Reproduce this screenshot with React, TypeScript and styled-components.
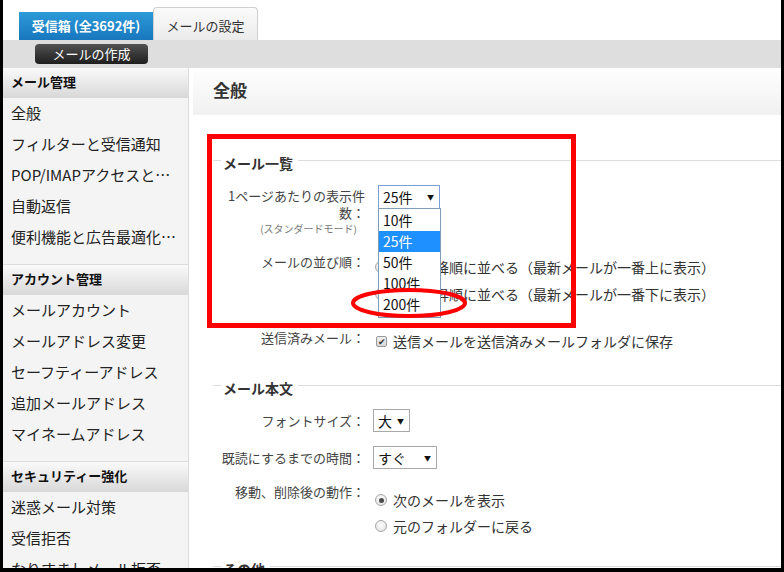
import React from 'react';
import styled, { createGlobalStyle } from 'styled-components';

const FONT = `"Noto Sans CJK JP", "Noto Sans", sans-serif`;

const GlobalStyle = createGlobalStyle`
  html, body {
    margin: 0;
    background: #000;
  }
  body {
    font-family: ${FONT};
  }
`;

const menuGroups = [
  {
    title: 'メール管理',
    items: ['全般', 'フィルターと受信通知', 'POP/IMAPアクセスと…', '自動返信', '便利機能と広告最適化…'],
  },
  {
    title: 'アカウント管理',
    items: ['メールアカウント', 'メールアドレス変更', 'セーフティーアドレス', '追加メールアドレス', 'マイネームアドレス'],
  },
  {
    title: 'セキュリティー強化',
    items: ['迷惑メール対策', '受信拒否', 'なりすましメール拒否'],
  },
];

const perPage = ['10件', '25件', '50件', '100件', '200件'];

const App = () => {
  return (
    <React.Fragment>
      <GlobalStyle />
      <Frame>
        <TabBar>
          <Tab $active>受信箱 (全3692件)</Tab>
          <Tab>メールの設定</Tab>
        </TabBar>
        <ToolBar>
          <ComposeButton>メールの作成</ComposeButton>
        </ToolBar>
        <Body>
          <Sidebar>
            {menuGroups.map((group, i) => (
              <Group key={group.title} $first={i === 0}>
                <GroupHead>{group.title}</GroupHead>
                {group.items.map((item) => (
                  <Item key={item}>{item}</Item>
                ))}
              </Group>
            ))}
          </Sidebar>
          <Main>
            <TitleBar>全般</TitleBar>
            <Content>
              <SectionHead $mt={38}>
                <span>メール一覧</span>
              </SectionHead>

              <Row $mt={12}>
                <Label $pt={2}>
                  1ページあたりの表示件数：
                  <Sub>(スタンダードモード)</Sub>
                </Label>
                <div>
                  <Select $width={62} $height={24} $focused $ml={5}>
                    <span>25件</span>
                    <Arrow>▼</Arrow>
                    <DropList>
                      {perPage.map((p) => (
                        <DropOption key={p} $selected={p === '25件'}>
                          {p}
                        </DropOption>
                      ))}
                    </DropList>
                  </Select>
                </div>
              </Row>

              <Row $mt={17}>
                <Label>メールの並び順：</Label>
                <div>
                  <Choice $height={27}>
                    <Radio $checked />
                    日付の降順に並べる（最新メールが一番上に表示）
                  </Choice>
                  <Choice $height={27}>
                    <Radio />
                    日付の昇順に並べる（最新メールが一番下に表示）
                  </Choice>
                </div>
              </Row>

              <Row $mt={22}>
                <Label>送信済みメール：</Label>
                <div>
                  <Choice $height={24}>
                    <Check>✔</Check>
                    送信メールを送信済みメールフォルダに保存
                  </Choice>
                </div>
              </Row>

              <SectionHead $mt={25}>
                <span>メール本文</span>
              </SectionHead>

              <Row $mt={11}>
                <Label $lh={23}>フォントサイズ：</Label>
                <div>
                  <Select $width={37} $height={23}>
                    <span>大</span>
                    <Arrow>▼</Arrow>
                  </Select>
                </div>
              </Row>

              <Row $mt={14}>
                <Label $lh={23}>既読にするまでの時間：</Label>
                <div>
                  <Select $width={64} $height={23}>
                    <span>すぐ</span>
                    <Arrow>▼</Arrow>
                  </Select>
                </div>
              </Row>

              <Row $mt={14}>
                <Label>移動、削除後の動作：</Label>
                <Controls $pt={4}>
                  <Choice $height={26}>
                    <Radio $checked />
                    次のメールを表示
                  </Choice>
                  <Choice $height={26}>
                    <Radio />
                    元のフォルダーに戻る
                  </Choice>
                </Controls>
              </Row>

              <SectionHead $mt={20}>
                <span>その他</span>
              </SectionHead>
            </Content>
          </Main>
        </Body>

        <RedBox />
        <RedRing width="120" height="34" viewBox="0 0 120 34">
          <ellipse cx="60" cy="17" rx="56" ry="13" fill="none" stroke="#ff0000" strokeWidth="4" />
        </RedRing>
      </Frame>
    </React.Fragment>
  );
};

export default App;

const Frame = styled.div`
  position: relative;
  width: 778px;
  height: 568px;
  margin-left: 3px;
  background: #fff;
  overflow: hidden;
  display: flex;
  flex-direction: column;
`;

const TabBar = styled.div`
  height: 40px;
  flex-shrink: 0;
  display: flex;
  align-items: flex-end;
  padding-left: 16px;
`;

const Tab = styled.div<{ $active?: boolean }>`
  box-sizing: border-box;
  font-size: 13px;
  text-align: center;
  ${(p) =>
    p.$active
      ? `
    width: 134px;
    height: 28px;
    line-height: 27px;
    color: #fff;
    font-weight: bold;
    background: linear-gradient(#2d9ad9, #1877bd);
  `
      : `
    width: 105px;
    height: 33px;
    padding-top: 8px;
    line-height: 20px;
    color: #333;
    border: 1px solid #cfcfcf;
    border-bottom: none;
    border-radius: 4px 4px 0 0;
    background: linear-gradient(#fbfbfb, #ebebeb);
  `}
`;

const ToolBar = styled.div`
  height: 28px;
  flex-shrink: 0;
  background: #dedede;
  padding: 4px 0 0 32px;
  box-sizing: border-box;
`;

const ComposeButton = styled.div`
  width: 113px;
  height: 20px;
  line-height: 19px;
  border-radius: 4px;
  background: linear-gradient(#525252, #1e1e1e);
  color: #fff;
  font-size: 13px;
  text-align: center;
`;

const Body = styled.div`
  flex: 1;
  min-height: 0;
  display: flex;
`;

const Sidebar = styled.div`
  width: 185px;
  flex-shrink: 0;
  background: #f4f4f4;
  border-right: 1px solid #dcdcdc;
`;

const Group = styled.div<{ $first?: boolean }>`
  padding-bottom: 11px;
  border-top: ${(p) => (p.$first ? 'none' : '1px solid #dcdcdc')};
`;

const GroupHead = styled.div`
  height: 30px;
  line-height: 28px;
  padding: 0 0 2px 8px;
  box-sizing: border-box;
  font-size: 13px;
  font-weight: bold;
  color: #111;
  background: linear-gradient(#fafafa, #d8d8d8);
`;

const Item = styled.div`
  height: 31px;
  line-height: 29px;
  padding: 0 0 2px 8px;
  box-sizing: border-box;
  font-size: 15px;
  color: #222;
  white-space: nowrap;
`;

const Main = styled.div`
  flex: 1;
  margin-left: 4px;
  min-width: 0;
`;

const TitleBar = styled.div`
  height: 47px;
  line-height: 44px;
  padding: 0 0 3px 20px;
  box-sizing: border-box;
  font-size: 17px;
  font-weight: bold;
  color: #333;
  background: linear-gradient(#fefefe, #f1f1f1);
`;

const Content = styled.div`
  padding-left: 20px;
`;

const SectionHead = styled.div<{ $mt: number }>`
  display: flex;
  align-items: center;
  height: 20px;
  margin-top: ${(p) => p.$mt}px;
  font-size: 14px;
  font-weight: bold;
  color: #333;
  span {
    padding: 0 5px 0 2px;
  }
  &::before,
  &::after {
    content: '';
    height: 1px;
    margin-top: -6px;
    background: #dddddd;
  }
  &::before {
    width: 8px;
  }
  &::after {
    flex: 1;
  }
`;

const Row = styled.div<{ $mt: number }>`
  display: grid;
  grid-template-columns: 152px 1fr;
  column-gap: 8px;
  margin-top: ${(p) => p.$mt}px;
`;

const Label = styled.div<{ $pt?: number; $lh?: number }>`
  text-align: right;
  font-size: 13px;
  line-height: ${(p) => p.$lh || 17}px;
  padding-top: ${(p) => p.$pt || 0}px;
  color: #444;
`;

const Sub = styled.span`
  display: block;
  margin-top: 1px;
  padding-right: 8px;
  font-size: 10px;
  line-height: 14px;
  color: #777;
`;

const Controls = styled.div<{ $pt?: number }>`
  padding-top: ${(p) => p.$pt || 0}px;
`;

const Select = styled.div<{ $width: number; $height: number; $focused?: boolean; $ml?: number }>`
  position: relative;
  box-sizing: border-box;
  display: flex;
  align-items: center;
  justify-content: space-between;
  width: ${(p) => p.$width}px;
  height: ${(p) => p.$height}px;
  margin-left: ${(p) => p.$ml || 0}px;
  padding: 0 5px 0 4px;
  border: 1px solid ${(p) => (p.$focused ? '#7b9fd6' : '#a9a9a9')};
  background: #fff;
  font-size: 14px;
  color: #111;
`;

const Arrow = styled.span`
  font-size: 7px;
  color: #111;
`;

const DropList = styled.div`
  position: absolute;
  top: 100%;
  left: -1px;
  z-index: 2;
  box-sizing: border-box;
  width: 63px;
  padding: 1px 0 2px;
  border: 1px solid #7f9db9;
  background: #fff;
`;

const DropOption = styled.div<{ $selected?: boolean }>`
  height: 21px;
  line-height: 21px;
  padding-left: 4px;
  font-size: 14px;
  color: ${(p) => (p.$selected ? '#fff' : '#111')};
  background: ${(p) => (p.$selected ? '#1e90ff' : 'transparent')};
`;

const Choice = styled.div<{ $height: number }>`
  display: flex;
  align-items: center;
  height: ${(p) => p.$height}px;
  font-size: 14px;
  color: #333;
  white-space: nowrap;
`;

const Radio = styled.span<{ $checked?: boolean }>`
  position: relative;
  box-sizing: border-box;
  width: 12px;
  height: 12px;
  margin: 0 6px 0 2px;
  border-radius: 50%;
  border: 1px solid #a8a8a8;
  background: radial-gradient(circle at 50% 40%, #ffffff, #dcdcdc);
  flex-shrink: 0;
  &::after {
    content: '';
    display: ${(p) => (p.$checked ? 'block' : 'none')};
    position: absolute;
    left: 2.5px;
    top: 2.5px;
    width: 5px;
    height: 5px;
    border-radius: 50%;
    background: #4a4a4a;
  }
`;

const Check = styled.span`
  box-sizing: border-box;
  width: 11px;
  height: 11px;
  margin: 0 6px 0 3px;
  border: 1px solid #9a9a9a;
  border-radius: 2px;
  background: linear-gradient(#f0f0f0, #d6d6d6);
  font-size: 9px;
  line-height: 9px;
  text-align: center;
  color: #333;
  flex-shrink: 0;
`;

const RedBox = styled.div`
  position: absolute;
  left: 204px;
  top: 134px;
  width: 369px;
  height: 194px;
  box-sizing: border-box;
  border: 5px solid #ff0000;
  z-index: 5;
  pointer-events: none;
`;

const RedRing = styled.svg`
  position: absolute;
  left: 346px;
  top: 286px;
  z-index: 5;
`;
